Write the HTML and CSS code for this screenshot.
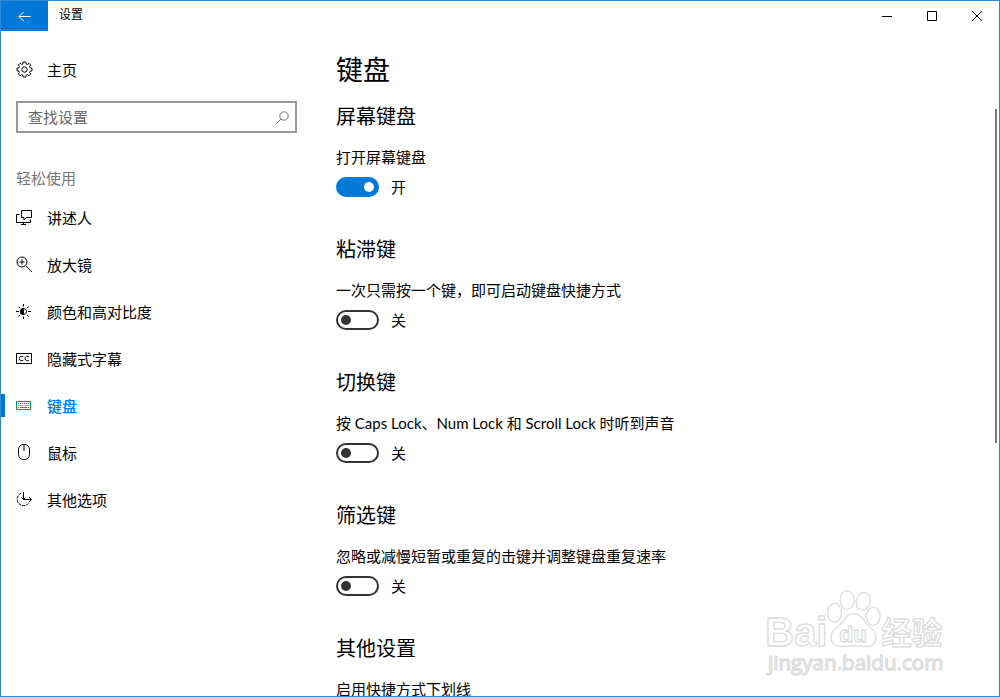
FILE: index.html
```html
<!DOCTYPE html>
<html lang="zh-CN">
<head>
    <meta charset="UTF-8">
    <meta name="viewport" content="width=device-width, initial-scale=1.0">
    <title>设置</title>
    <link rel="stylesheet" href="styles.css">
</head>
<body>

<div class="window">
    <header class="titlebar">
        <button class="back" type="button" aria-label="返回">
            <svg width="13" height="11" viewBox="0 0 13 11"><path d="M12.5 5.5H1M5.5 1L1 5.5L5.5 10"/></svg>
        </button>
        <span class="title">设置</span>
        <button class="control" type="button" aria-label="最小化">
            <svg width="10" height="10" viewBox="0 0 10 10"><path d="M0 5.5H10"/></svg>
        </button>
        <button class="control" type="button" aria-label="最大化">
            <svg width="10" height="10" viewBox="0 0 10 10"><path d="M.5 .5H9.5V9.5H.5Z"/></svg>
        </button>
        <button class="control" type="button" aria-label="关闭">
            <svg width="10" height="10" viewBox="0 0 10 10"><path d="M0 0L10 10M10 0L0 10"/></svg>
        </button>
    </header>

    <div class="content">
        <aside class="sidebar">
            <a class="item" href="#home">
                <svg width="17" height="17" viewBox="0 0 17 17"><path d="M7.2 1H9.8L10.2 3L11.4 3.5L13 2.3L14.8 4.1L13.6 5.7L14.1 6.8L16 7.2V9.8L14.1 10.2L13.6 11.4L14.8 13L13 14.8L11.4 13.6L10.2 14.1L9.8 16H7.2L6.8 14.1L5.7 13.6L4.1 14.8L2.3 13L3.5 11.4L3 10.2L1 9.8V7.2L3 6.8L3.5 5.7L2.3 4.1L4.1 2.3L5.7 3.5L6.8 3Z"/><circle cx="8.5" cy="8.5" r="2.7"/></svg>
                主页
            </a>

            <div class="search">
                <input type="text" placeholder="查找设置" aria-label="查找设置">
                <svg width="13" height="13" viewBox="0 0 13 13"><circle cx="8" cy="5" r="4.2"/><path d="M5 8L.5 12.5"/></svg>
            </div>

            <h3 class="group">轻松使用</h3>

            <nav>
                <a class="item" href="#narrator">
                    <svg width="17" height="17" viewBox="0 0 17 17"><path d="M5.5 1.5H15.5V8.5H10.5L8 11V8.5H5.5ZM3.5 5.5H.5V13.5H14.5V10.5M7.5 13.5V15.5M5 15.5H10"/></svg>
                    讲述人
                </a>
                <a class="item" href="#magnifier">
                    <svg width="17" height="17" viewBox="0 0 17 17"><circle cx="6" cy="6" r="5"/><path d="M9.7 9.7L16 16M6 3.5V8.5M3.5 6H8.5"/></svg>
                    放大镜
                </a>
                <a class="item" href="#contrast">
                    <svg width="17" height="17" viewBox="0 0 17 17"><circle cx="7.5" cy="8.5" r="3"/><path class="solid" d="M7.5 5.5A3 3 0 0 0 7.5 11.5Z"/><path d="M7.5 1V3.5M7.5 13.5V16M0 8.5H3M12 8.5H15M2.5 3.5L4.2 5.2M10.8 11.8L12.5 13.5M12.5 3.5L10.8 5.2M4.2 11.8L2.5 13.5"/></svg>
                    颜色和高对比度
                </a>
                <a class="item" href="#captions">
                    <svg width="17" height="17" viewBox="0 0 17 17"><path d="M.5 3.5H15.5V13.5H.5ZM7.3 6.8C6 5.8 3.3 6 3.3 8.5S6 11.2 7.3 10.2M13 6.8C11.7 5.8 9 6 9 8.5S11.7 11.2 13 10.2"/></svg>
                    隐藏式字幕
                </a>
                <a class="item active" href="#keyboard">
                    <svg width="17" height="17" viewBox="0 0 17 17"><path d="M.5 4.5H14.5V12.5H.5Z"/><path class="keys" d="M2 6.5H13M2.5 8.5H13M2 10.5H3M12 10.5H13"/><path d="M4 10.5H11"/></svg>
                    键盘
                </a>
                <a class="item" href="#mouse">
                    <svg width="17" height="17" viewBox="0 0 17 17"><rect x="2.5" y=".5" width="11" height="15" rx="5"/><path d="M8 1V7"/></svg>
                    鼠标
                </a>
                <a class="item" href="#other">
                    <svg width="17" height="17" viewBox="0 0 17 17"><path d="M7.5 1V8.5H15.5M13 6L15.5 8.5L13 11M5.5 6.5L7.5 8.5L9.5 6.5"/><path stroke-dasharray="3 1" d="M5 2.2A6.5 6.5 0 1 0 13.2 11.5"/></svg>
                    其他选项
                </a>
            </nav>
        </aside>

        <main class="main">
            <h1>键盘</h1>

            <section class="setting">
                <h2>屏幕键盘</h2>
                <p>打开屏幕键盘</p>
                <label class="toggle"><input type="checkbox" checked>开</label>
            </section>

            <section class="setting">
                <h2>粘滞键</h2>
                <p>一次只需按一个键，即可启动键盘快捷方式</p>
                <label class="toggle"><input type="checkbox">关</label>
            </section>

            <section class="setting">
                <h2>切换键</h2>
                <p>按 Caps Lock、Num Lock 和 Scroll Lock 时听到声音</p>
                <label class="toggle"><input type="checkbox">关</label>
            </section>

            <section class="setting">
                <h2>筛选键</h2>
                <p>忽略或减慢短暂或重复的击键并调整键盘重复速率</p>
                <label class="toggle"><input type="checkbox">关</label>
            </section>

            <section class="setting">
                <h2>其他设置</h2>
                <p>启用快捷方式下划线</p>
            </section>
        </main>
    </div>

    <div class="scroll-thumb"></div>

    <svg class="watermark" width="183" height="90" viewBox="45 20 550 270">
        <ellipse cx="254" cy="97" rx="21" ry="28"/>
        <ellipse cx="292" cy="59" rx="21" ry="28"/>
        <ellipse cx="340" cy="63" rx="21" ry="27" transform="rotate(12 340 63)"/>
        <ellipse cx="370" cy="108" rx="21" ry="27"/>
        <text class="brand" x="46" y="197">Bai</text>
        <path d="M312 100C285 100 281 127 263 140C241 155 237 178 252 192C266 205 290 196 312 196S354 205 370 192C384 178 380 155 360 140C342 127 338 100 312 100Z"/>
        <text class="du" x="268" y="185">du</text>
        <text class="cn" x="395" y="190">经验</text>
        <text class="site" x="54" y="270">jingyan.baidu.com</text>
    </svg>
</div>

</body>
</html>
```
FILE: styles.css
```css
* {
    box-sizing: border-box;
}
body {
    margin: 0;
    font-family: Lato, "Noto Sans CJK SC", sans-serif;
    font-size: 15px;
    line-height: 20px;
    color: #000;
    background-color: #fff;
}
h1, h2, h3, p {
    margin: 0;
    font-weight: normal;
}
svg {
    fill: none;
    stroke: currentColor;
    flex-shrink: 0;
}
button {
    display: flex;
    align-items: center;
    justify-content: center;
    padding: 0;
    border: none;
    background: none;
    color: #000;
}
.window {
    position: relative;
    display: flex;
    flex-direction: column;
    height: 100vh;
    border: 1px solid #2f8ad8;
    overflow: hidden;
}

/* title bar */
.titlebar {
    display: flex;
    flex-shrink: 0;
    height: 30px;
}
.back {
    width: 47px;
    background-color: #0078d7;
    color: #fff;
}
.title {
    flex: 1;
    padding-left: 11px;
    font-size: 12px;
    line-height: 28px;
}
.control {
    width: 45px;
}

.content {
    display: flex;
    flex: 1;
    min-height: 0;
}

/* left column */
.sidebar {
    width: 296px;
    flex-shrink: 0;
    padding-top: 15px;
}
.item {
    display: flex;
    align-items: center;
    gap: 14px;
    height: 47px;
    padding-left: 15px;
    color: #000;
    text-decoration: none;
}
.active {
    color: #0078d7;
    font-weight: 500;
    background: linear-gradient(#0078d7, #0078d7) left center / 4px 23px no-repeat;
}
.solid {
    fill: currentColor;
}
.keys {
    stroke-dasharray: 1 1;
}
.search {
    display: flex;
    align-items: center;
    height: 32px;
    margin: 8px 0 35px 15px;
    padding: 0 6px 0 10px;
    border: 2px solid #999;
    color: #777;
}
.search input {
    flex: 1;
    min-width: 0;
    padding: 0;
    border: none;
    outline: none;
    font: inherit;
    background: none;
}
.search input::placeholder {
    color: #666;
}
.group {
    margin: 0 0 6px 15px;
    font-size: 15px;
    color: #777;
}

/* right column */
.main {
    flex: 1;
    padding: 21px 20px 0 39px;
    overflow: hidden;
}
h1 {
    margin-bottom: 14px;
    font-size: 27px;
    line-height: 36px;
}
.setting {
    margin-bottom: 38px;
}
h2 {
    margin-bottom: 17px;
    font-size: 20px;
    line-height: 28px;
}
.toggle {
    display: flex;
    align-items: center;
    gap: 12px;
    margin-top: 10px;
}
.toggle input {
    display: flex;
    align-items: center;
    appearance: none;
    width: 43px;
    height: 20px;
    margin: 0;
    padding: 0 3px;
    border: 2px solid #333;
    border-radius: 10px;
}
.toggle input::before {
    content: "";
    width: 10px;
    height: 10px;
    border-radius: 50%;
    background-color: #333;
}
.toggle input:checked {
    justify-content: flex-end;
    border-color: #0078d7;
    background-color: #0078d7;
}
.toggle input:checked::before {
    background-color: #fff;
}

.scroll-thumb {
    position: absolute;
    top: 108px;
    right: 2px;
    width: 2px;
    height: 48%;
    background-color: #777;
}

/* logo over the page corner */
.watermark {
    position: absolute;
    right: 51px;
    bottom: 19px;
    fill: #fff;
    stroke: #ddd;
    stroke-width: 4;
}
.brand {
    font: bold 120px "Liberation Sans", sans-serif;
}
.du {
    font: bold 68px "Liberation Sans", sans-serif;
}
.cn {
    font: bold 91px "Noto Sans CJK SC", sans-serif;
}
.site {
    font: 62px "Open Sans", sans-serif;
}
```
